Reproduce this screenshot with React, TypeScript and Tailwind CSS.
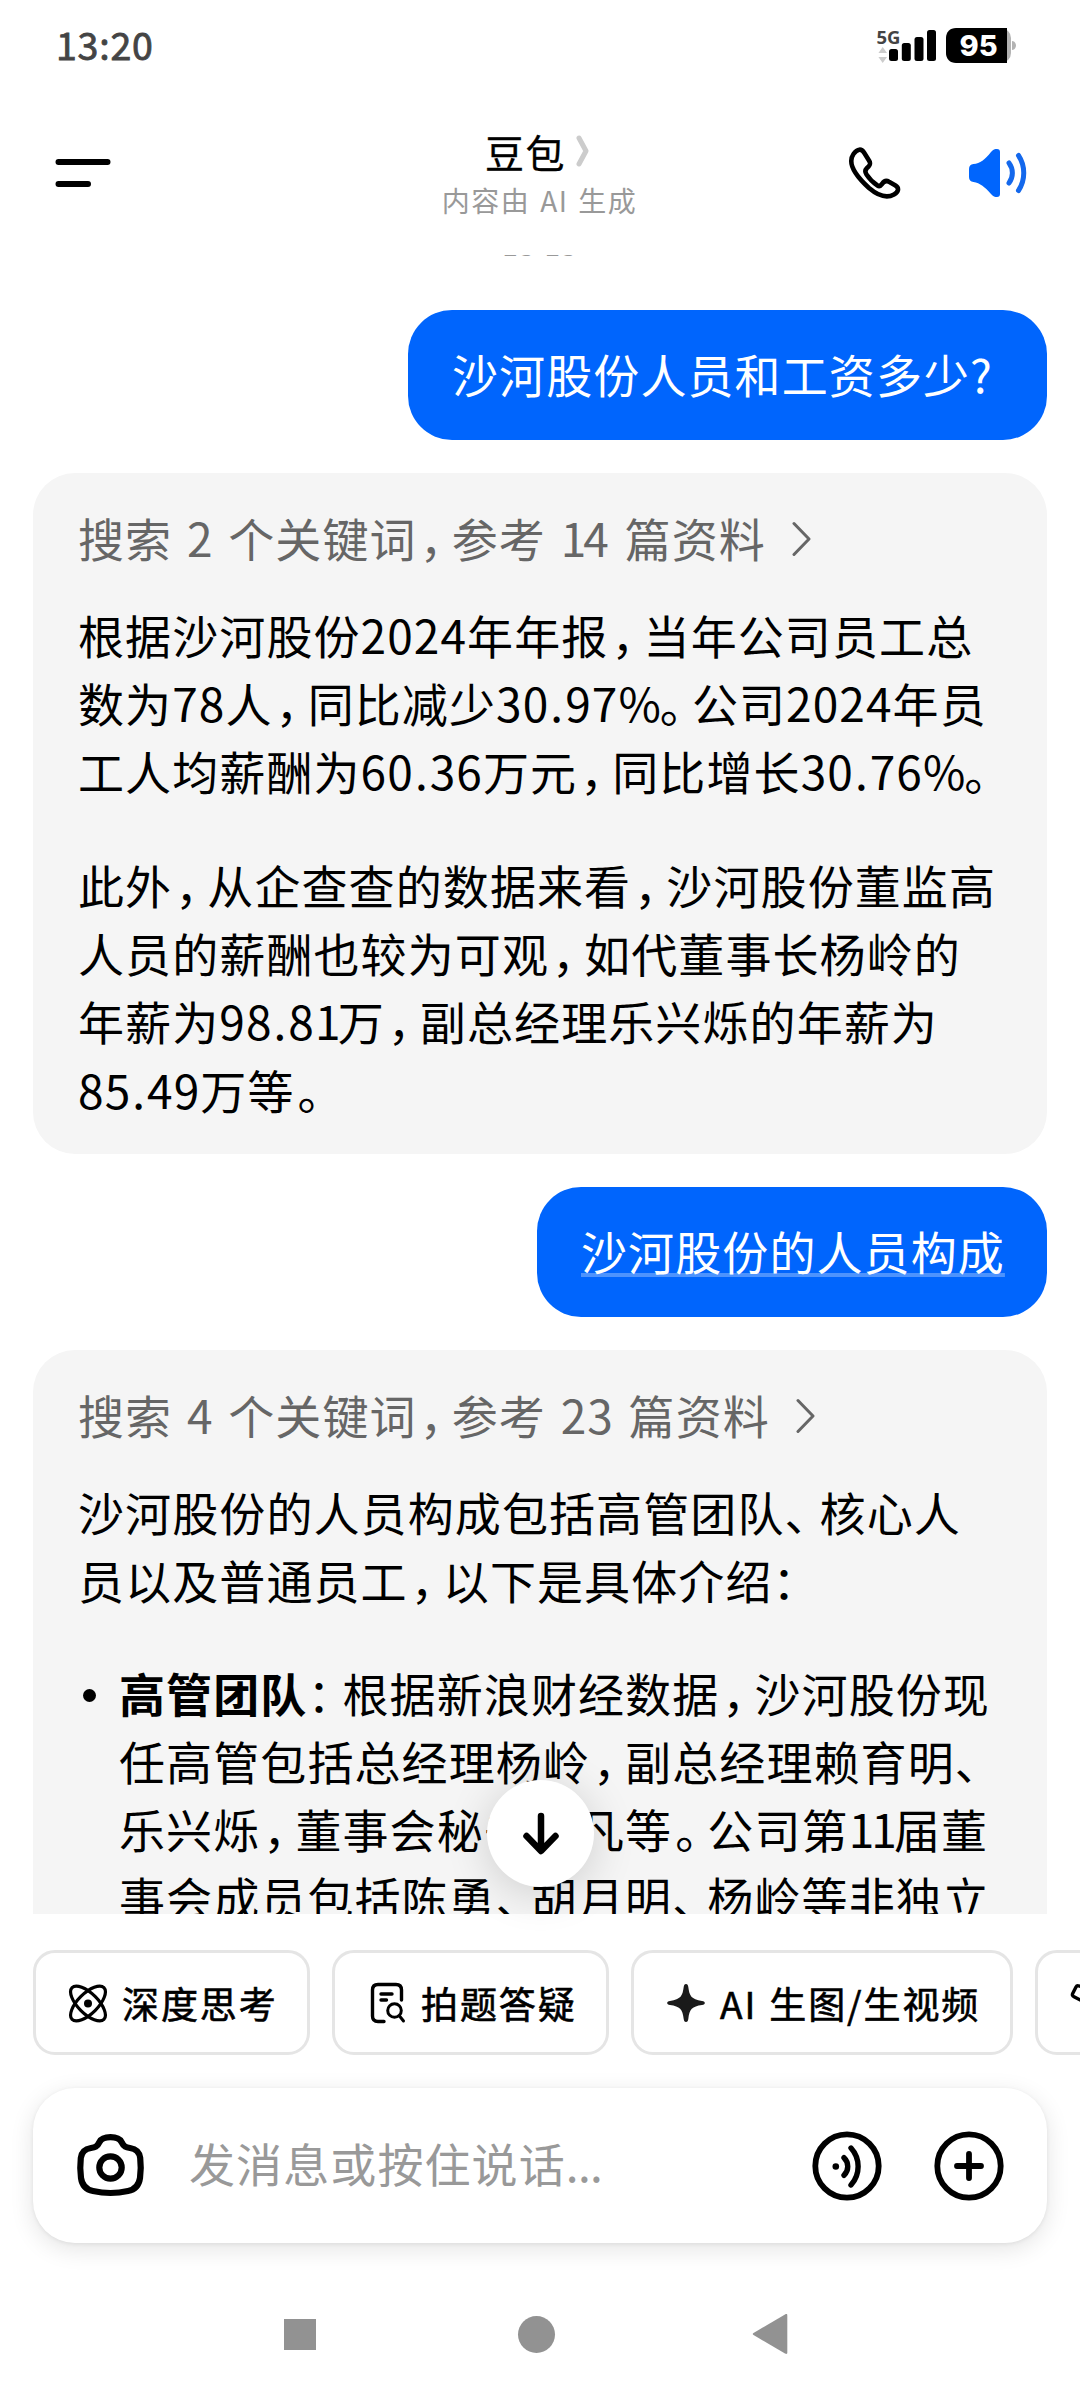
import React from "react";

const FONT = "font-['Noto_Sans_CJK_SC','Noto_Sans',sans-serif]";

// Punctuation is set narrower than a full em, and so is the digit 1
const SPACING: Record<string, string> = {
  "，": "ml-[3px] tracking-[-13.900px]",
  "。": "ml-[3px] tracking-[-13.900px]",
  "、": "tracking-[-10.900px]",
  "：": "tracking-[-10.900px]",
  "1": "tracking-[-2.900px]",
  ".": "ml-[1px] tracking-[2px]",
  "%": "tracking-[-4px]",
};

function Line({ text }: { text: string }) {
  return (
    <>
      {text.split(/([，。、：1.%])/).map((part, i) =>
        SPACING[part] ? <span key={i} className={SPACING[part]}>{part}</span> : part
      )}
    </>
  );
}

function Paragraph({ lines }: { lines: string[] }) {
  return (
    <div className="relative -top-[3px]">
      {lines.map((line) => (
        <p key={line} className="h-[68.1px] leading-[68.1px] whitespace-nowrap">
          <Line text={line} />
        </p>
      ))}
    </div>
  );
}

function SearchInfo({ text }: { text: string }) {
  return (
    <div className="flex items-center h-[68px] text-[#666] whitespace-nowrap">
      <span className="relative -top-[2px] leading-[68px] [word-spacing:3.300px]">
        <Line text={text} />
      </span>
      <svg width="20" height="36" viewBox="0 0 20 36" fill="none" className="ml-[26px]">
        <path d="M2 2.5L17 18L2 33.5" stroke="#666" strokeWidth="3" strokeLinecap="round" strokeLinejoin="round" />
      </svg>
    </div>
  );
}

function StatusBar() {
  return (
    <div className="flex items-start justify-between h-[92px] pl-[56px] pr-[63px]">
      <span className="mt-[16px] text-[37.500px] tracking-[0.800px] leading-[56px] text-[#444] [-webkit-text-stroke:0.8px_#444]">13:20</span>
      <svg width="141" height="40" viewBox="876 26 141 40" className="mt-[26px]">
        <text x="876.5" y="43.5" fontSize="18.5" fontWeight="700" fill="#444" letterSpacing="0" fontFamily="Open Sans">5G</text>
        <path d="M882.700 47L887 53h-8.600zM882.700 63l-4.300-6h8.600z" fill="#ccc" />
        <rect x="889" y="49" width="9" height="12" rx="2.500" />
        <rect x="901.800" y="43" width="9" height="18" rx="2.500" />
        <rect x="914.500" y="37" width="9" height="24" rx="2.500" />
        <rect x="927" y="30" width="9" height="31" rx="2.500" />
        <rect x="950" y="28" width="61" height="35" rx="10" fill="#b3b3b3" />
        <path d="M1012 41c3 0 4 3 4 4.500s-1 4.500-4 4.500z" fill="#b3b3b3" />
        <path d="M956 28h51v35h-51c-6 0-10-4-10-10v-15c0-6 4-10 10-10z" />
        <text x="978.500" y="56" fontSize="29" fontWeight="800" fill="#fff" letterSpacing="0" textAnchor="middle" fontFamily="Inter">95</text>
      </svg>
    </div>
  );
}

function Header() {
  return (
    <header className="flex h-[163px] shrink-0 justify-between pl-[55px] pr-[52px]">
      <svg width="182" height="30" viewBox="0 0 182 30" className="mt-[66px]">
        <path d="M3.500 4H52.500M3.500 26H33" stroke="#000" strokeWidth="6" strokeLinecap="round" />
      </svg>
      <div className="flex flex-col items-center pr-[5px]">
        <div className="mt-[31px] mr-[4px] flex items-center">
          <span className="text-[39px] leading-[56px] tracking-[1.500px] [-webkit-text-stroke:0.3px_#000]">豆包</span>
          <svg width="14" height="32" viewBox="0 0 14 32" fill="none" className="ml-[10px]">
            <path d="M3 3L10 16L3 29" stroke="#ccc" strokeWidth="5" strokeLinecap="round" strokeLinejoin="round" />
          </svg>
        </div>
        <span className="mt-[3px] text-[28px] leading-[36px] tracking-[1.500px] [word-spacing:2px] text-[#999]">内容由 AI 生成</span>
      </div>
      <div className="flex gap-[66px] mt-[53px]">
        <svg width="54" height="54" viewBox="847 146 54 54" fill="none">
          <path
            d="M853.500 155C857.500 149.500 861.500 149.500 864 153.500L869.300 162C871 165 870 166.500 867 169C865 171 864.800 173 866.500 175.500C869.500 180 873.500 184 877.500 186.500C879 187.500 880.500 187 882 185C884 182 886 181 889 182.800L895.500 186.500C899.500 189 898.500 193 894 195.500C888 198.800 879 197.500 869 189C858 179 846.500 165 853.500 155Z"
            stroke="#000" strokeWidth="4.600" strokeLinejoin="round"
          />
        </svg>
        <svg width="61" height="52" viewBox="967 148 61 52" fill="none" className="mt-[3px]">
          <path d="M969 169C969 166 970.500 164.500 973.500 164C980 163.500 985 159.500 991 152C993 149.500 995 149 997 149C999 149 1000 150 1000 152V194C1000 196 999 197 997 197C995 197 993 196.500 991 194C985 187 980 183 973.500 182C970.500 181.500 969 180 969 177Z" fill="#0065fd" />
          <path d="M1009 163C1013.500 169 1013.500 177 1009 183" stroke="#1468ec" strokeWidth="5" strokeLinecap="round" />
          <path d="M1018.500 155.500C1025.500 166 1025.500 180 1018.500 190.500" stroke="#1468ec" strokeWidth="5" strokeLinecap="round" />
        </svg>
      </div>
    </header>
  );
}

function Chat() {
  return (
    <main className="relative h-[1659px] shrink-0 overflow-hidden px-[33px]">
      {/* previous timestamp, almost scrolled out */}
      <div className="h-[55px] overflow-hidden text-center text-[28px] leading-[40px] text-[#999]">
        <p className="-mt-[31px]">
          13<span className="relative -top-[6px]">:</span>13
        </p>
      </div>

      <div className="ml-auto w-[639px] h-[130px] rounded-[44px] bg-[#0065fd] px-[44px] text-white leading-[130px] whitespace-nowrap">
        <span className="relative -top-[2px]">沙河股份人员和工资多少?</span>
      </div>

      <div className="mt-[33px] h-[681px] rounded-[42px] bg-[#f5f5f5] pl-[45px] pt-[32px]">
        <SearchInfo text="搜索 2 个关键词，参考 14 篇资料" />
        <div className="mt-[30px] flex flex-col gap-[46px]">
          <Paragraph
            lines={[
              "根据沙河股份2024年年报，当年公司员工总",
              "数为78人，同比减少30.97%。公司2024年员",
              "工人均薪酬为60.36万元，同比增长30.76%。",
            ]}
          />
          <Paragraph
            lines={[
              "此外，从企查查的数据来看，沙河股份董监高",
              "人员的薪酬也较为可观，如代董事长杨岭的",
              "年薪为98.81万，副总经理乐兴烁的年薪为",
              "85.49万等。",
            ]}
          />
        </div>
      </div>

      <div className="mt-[33px] ml-auto w-[510px] h-[130px] rounded-[44px] bg-[#0065fd] px-[44px] text-white leading-[130px] whitespace-nowrap">
        <span className="relative -top-[2px] underline decoration-white/30 decoration-[4px] underline-offset-[3px] [text-decoration-skip-ink:none]">沙河股份的人员构成</span>
      </div>

      <div className="mt-[33px] h-[700px] rounded-[42px] bg-[#f5f5f5] pl-[45px] pt-[32px]">
        <SearchInfo text="搜索 4 个关键词，参考 23 篇资料" />
        <div className="mt-[30px]">
          <Paragraph lines={["沙河股份的人员构成包括高管团队、核心人", "员以及普通员工，以下是具体介绍："]} />
        </div>
        <div className="mt-[45px] flex">
          <span className="ml-[5px] mt-[27.500px] mr-[23px] size-[13px] shrink-0 rounded-full bg-black" />
          <div className="relative -top-[3px] leading-[68.1px] whitespace-nowrap">
            <p><b>高管团队</b><Line text="：根据新浪财经数据，沙河股份现" /></p>
            <p><Line text="任高管包括总经理杨岭，副总经理赖育明、" /></p>
            <p><Line text="乐兴烁，董事会秘书王凡等。公司第11届董" /></p>
            <p><Line text="事会成员包括陈勇、胡月明、杨岭等非独立" /></p>
          </div>
        </div>
      </div>
    </main>
  );
}

function ScrollDown() {
  return (
    <button className="absolute left-[487px] top-[1780px] flex size-[107px] items-center justify-center rounded-full bg-white shadow-[0_6px_44px_rgba(0,0,0,0.16)]">
      <svg width="44" height="48" viewBox="0 0 44 48" fill="none">
        <path d="M22 6V40M7.500 26L22 41L36.500 26" stroke="#000" strokeWidth="6.500" strokeLinecap="round" strokeLinejoin="round" />
      </svg>
    </button>
  );
}

function Chip({ icon, label, className }: { icon: React.ReactNode; label?: string; className: string }) {
  return (
    <button className={`flex h-[105px] shrink-0 items-center rounded-[22px] border-3 border-[#e5e5e5] pl-[32px] ${className}`}>
      {icon}
      {label && (
        <span className="ml-[14px] text-[37px] leading-[60px] tracking-[1.900px] whitespace-nowrap [word-spacing:2px] [-webkit-text-stroke:0.6px_#000]">{label}</span>
      )}
    </button>
  );
}

function Chips() {
  return (
    <div className="mt-[36px] flex shrink-0 gap-[22px] overflow-hidden pl-[33px]">
      <Chip
        className="w-[277px]"
        label="深度思考"
        icon={
          <svg width="40" height="40" viewBox="0 0 40 40" fill="none" stroke="#000" strokeWidth="3.200">
            <ellipse cx="20" cy="20.500" rx="22.500" ry="10" transform="rotate(45 20 20.500)" />
            <ellipse cx="20" cy="20.500" rx="22.500" ry="10" transform="rotate(-45 20 20.500)" />
            <circle cx="20" cy="20.500" r="4" fill="#000" stroke="none" />
          </svg>
        }
      />
      <Chip
        className="w-[277px]"
        label="拍题答疑"
        icon={
          <svg width="40" height="42" viewBox="0 0 40 42" fill="none" stroke="#000" strokeWidth="3.400" strokeLinecap="round">
            <path d="M17 39.500H11C7.500 39.500 5.500 37.500 5.500 34V8C5.500 4.500 7.500 2.500 11 2.500H29C32.500 2.500 34.500 4.500 34.500 8V18" />
            <path d="M14 12H25M14 18H19.500" />
            <circle cx="27.500" cy="28.500" r="6.800" strokeWidth="3" />
            <path d="M32.500 34L36.500 39" strokeWidth="3" />
          </svg>
        }
      />
      <Chip
        className="w-[382px]"
        label="AI 生图/生视频"
        icon={
          <svg width="40" height="40" viewBox="0 0 40 40">
            <path d="M20 1C21.500 1 22 2 22.300 4C23.500 13 25 16 36 18C38 18.300 38.800 19 38.800 20C38.800 21 38 21.700 36 22C26 23.500 23.500 26 22.300 36C22 38 21.500 39 20 39C18.500 39 18 38 17.700 36C16.500 26 14 23.500 4 22C2 21.700 1.200 21 1.200 20C1.200 19 2 18.300 4 18C15 16 16.500 13 17.700 4C18 2 18.500 1 20 1Z" fill="#1a1a1a" />
          </svg>
        }
      />
      <Chip
        className="w-[277px]"
        icon={
          <svg width="40" height="40" viewBox="0 0 40 40" fill="none">
            <path d="M16 5L9 3C7.500 2.500 6.500 3 6 4L2.700 10.500C2 12 2.500 13 4 13.700L14 19" stroke="#000" strokeWidth="3.400" />
          </svg>
        }
      />
    </div>
  );
}

function InputBar() {
  return (
    <div className="mx-[33px] mt-[33px] flex h-[155px] shrink-0 items-center rounded-[42px] bg-white pl-[42px] pr-[42px] shadow-[0_6px_24px_rgba(0,0,0,0.11),0_1px_4px_rgba(0,0,0,0.07)]">
      <svg width="72" height="72" viewBox="75 2130 72 72" fill="none" stroke="#000" strokeWidth="6.200">
        <path d="M110.500 2137.200C116 2137.200 119.500 2138 121.500 2142C124 2147 126 2147.500 130 2148C136.500 2149 139.500 2152.500 140.200 2158C141 2165 141 2171 140 2178C139 2185 135.500 2189.500 128 2191C117 2193.500 104 2193.500 93 2191C85.500 2189.500 82 2185 81 2178C80 2171 80 2165 80.800 2158C81.500 2152.500 84.500 2149 91 2148C95 2147.500 97 2147 99.500 2142C101.500 2138 105 2137.200 110.500 2137.200Z" />
        <circle cx="110.500" cy="2167.500" r="11.200" />
      </svg>
      <span className="relative -top-[4px] ml-[42px] flex-1 leading-[68px] text-[#999] whitespace-nowrap">
        发消息或按住说话<span className="tracking-[-0.700px]">...</span>
      </span>
      <svg width="72" height="72" viewBox="0 0 72 72" fill="none" stroke="#000" strokeWidth="5.800" strokeLinecap="round">
        <circle cx="36" cy="36" r="31.700" />
        <circle cx="24.800" cy="36.500" r="3.300" fill="#000" stroke="none" />
        <path d="M33 27.700C38 32.500 38 40.500 33 45.300M40 18C49.500 28.500 49.500 44.500 40 55" strokeWidth="5.400" />
      </svg>
      <svg width="72" height="72" viewBox="0 0 72 72" fill="none" stroke="#000" strokeWidth="5.800" strokeLinecap="round" className="ml-[50px]">
        <circle cx="36" cy="36" r="31.700" />
        <path d="M36 24V48M24 36H48" />
      </svg>
    </div>
  );
}

function NavBar() {
  return (
    <div className="mt-[70px] flex h-[42px] shrink-0 items-center pl-[284px]">
      <span className="h-[31px] w-[32px] bg-[#929292]" />
      <span className="ml-[202px] size-[37px] rounded-full bg-[#929292]" />
      <svg width="36" height="42" viewBox="0 0 36 42" className="ml-[197px]">
        <path d="M33 1.500L1.500 20C0.500 20.600 0.500 21.400 1.500 22L33 40.500C34.500 41.300 35.300 41 35.300 39.500V2.500C35.300 1 34.500 0.700 33 1.500Z" fill="#929292" />
      </svg>
    </div>
  );
}

export default function App() {
  return (
    <div className={`relative flex h-[2400px] w-[1080px] flex-col overflow-hidden bg-white text-[46px] tracking-[1.100px] text-black ${FONT}`}>
      <StatusBar />
      <Header />
      <Chat />
      <ScrollDown />
      <Chips />
      <InputBar />
      <NavBar />
    </div>
  );
}
